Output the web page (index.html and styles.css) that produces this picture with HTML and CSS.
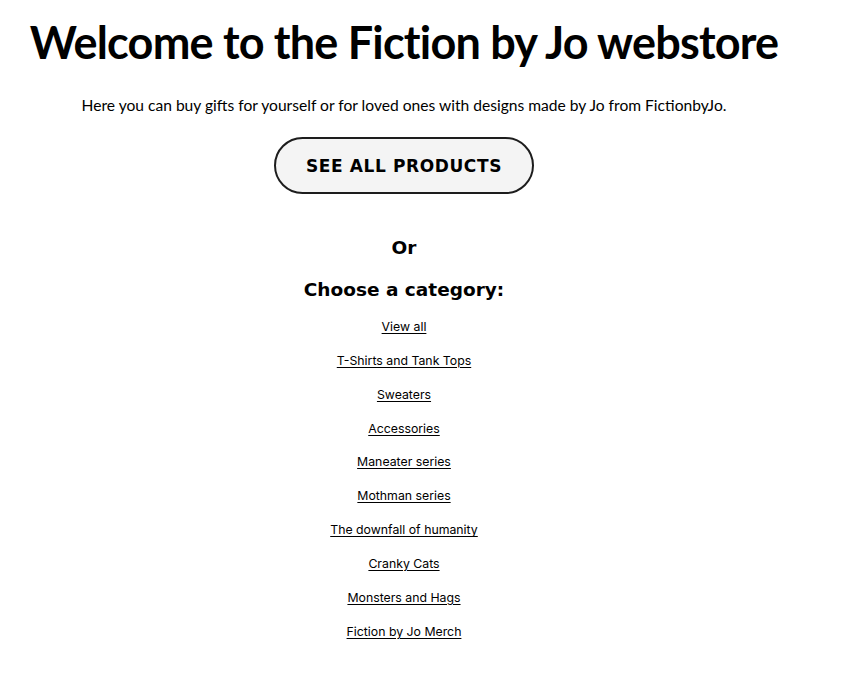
FILE: index.html
```html
<!DOCTYPE html>
<html lang="en">
<head>
<meta charset="utf-8">
<title>Fiction by Jo webstore</title>
<link rel="stylesheet" href="styles.css">
</head>
<body>
<main class="page">
  <h1 class="title">Welcome to the Fiction by Jo webstore</h1>
  <p class="intro">Here you can buy gifts for yourself or for loved ones with designs made by Jo from FictionbyJo.</p>
  <a class="btn" href="#">SEE ALL PRODUCTS</a>
  <h2 class="sub sub-or">Or</h2>
  <h2 class="sub sub-cat">Choose a category:</h2>
  <ul class="cats">
    <li><a href="#">View all</a></li>
    <li><a href="#">T-Shirts and Tank Tops</a></li>
    <li><a href="#">Sweaters</a></li>
    <li><a href="#">Accessories</a></li>
    <li><a href="#">Maneater series</a></li>
    <li><a href="#">Mothman series</a></li>
    <li><a href="#">The downfall of humanity</a></li>
    <li><a href="#">Cranky Cats</a></li>
    <li><a href="#">Monsters and Hags</a></li>
    <li><a href="#">Fiction by Jo Merch</a></li>
  </ul>
</main>
</body>
</html>
```
FILE: styles.css
```css
html, body {
  margin: 0;
  padding: 0;
  background: #fff;
  color: #000;
}
.page {
  width: 808px;
  display: flex;
  flex-direction: column;
  align-items: center;
  text-align: center;
}
.title {
  margin: 12px 0 0;
  font-family: Lato, "Open Sans", sans-serif;
  font-weight: 700;
  font-size: 45px;
  line-height: 60px;
  letter-spacing: -0.8px;
  white-space: nowrap;
}
.intro {
  margin: 21px 0 0;
  font-family: Lato, sans-serif;
  font-size: 15.6px;
  line-height: 24px;
}
.btn {
  margin-top: 20px;
  box-sizing: border-box;
  width: 260px;
  height: 57px;
  display: flex;
  align-items: center;
  justify-content: center;
  border: 2px solid #1d1d1d;
  border-radius: 30px;
  background: #f4f4f4;
  color: #000;
  text-decoration: none;
  font-family: "DejaVu Sans", sans-serif;
  font-weight: 700;
  font-size: 17px;
  letter-spacing: 0.6px;
}
.sub {
  margin: 0;
  font-family: "DejaVu Sans", sans-serif;
  font-weight: 700;
  font-size: 18.5px;
  line-height: 24px;
}
.sub-or { margin-top: 42px; }
.sub-cat { margin-top: 18px; }
.cats {
  list-style: none;
  margin: 16px 0 0;
  padding: 0;
  display: flex;
  flex-direction: column;
  align-items: center;
  gap: 15.85px;
}
.cats li {
  font-family: Inter, Roboto, sans-serif;
  font-size: 12.3px;
  line-height: 18px;
}
.cats a {
  color: #000;
  text-decoration: underline;
  text-underline-offset: 2px;
}
```
